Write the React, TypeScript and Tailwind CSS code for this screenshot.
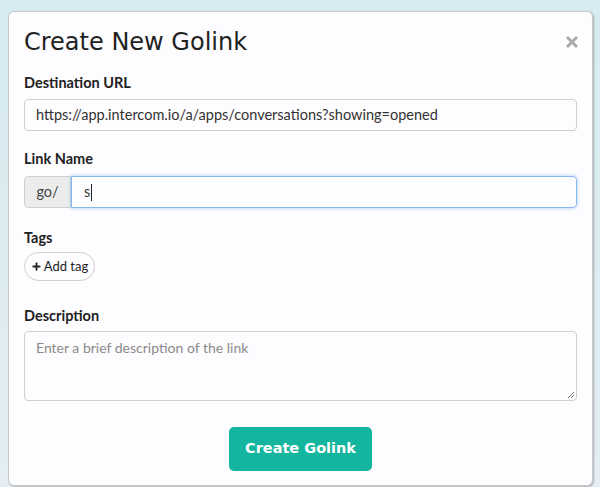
import { Plus } from 'lucide-react';

const App = () => {
    return (
        <div className="w-[600px] h-[487px] overflow-hidden bg-gradient-to-b from-[#d6ebf0] to-[#e4eef3] pt-[11px] pl-[8px]" style={{ fontFamily: 'Lato, "Noto Sans", sans-serif' }}>
            <div className="w-[585px] h-[475px] bg-[#fdfcfe] rounded-[6px] border border-[#c9c9c9] shadow-[1px_1px_2px_rgba(0,0,0,0.25)] px-[15px] pt-[15px] text-[#222]">

                {/* Header */}
                <div className="flex items-center justify-between h-[30px]">
                    <h1 className="text-[24px] leading-[30px] font-medium text-[#222]" style={{ fontFamily: '"DejaVu Sans", sans-serif' }}>
                        Create New Golink
                    </h1>
                    <svg className="mr-[-2px]" width="14" height="14" viewBox="0 0 14 14">
                        <path d="M2 2L12 12M12 2L2 12" stroke="#aaa" strokeWidth="3" />
                    </svg>
                </div>

                {/* Destination URL */}
                <label className="block mt-[15px] text-[14.5px] leading-[22px] font-bold">Destination URL</label>
                <div className="mt-[5px] h-[32px] border border-[#cfcfcf] rounded-[4px] flex items-center px-[11px] text-[14.5px] text-[#333]">
                    https://app.intercom.io/a/apps/conversations?showing=opened
                </div>

                {/* Link Name */}
                <label className="block mt-[17px] text-[14.5px] leading-[22px] font-bold">Link Name</label>
                <div className="mt-[6px] h-[32px] flex">
                    <div className="w-[47px] bg-[#ececec] border border-[#cfcfcf] rounded-l-[4px] flex items-center justify-center text-[14.5px] text-[#444]">
                        go/
                    </div>
                    <div className="flex-1 border border-[#86b9ea] rounded-r-[4px] shadow-[0_0_3px_1px_rgba(130,180,240,0.45)] flex items-center px-[12px] text-[14.5px] text-[#333]">
                        s<span className="inline-block w-px h-[17px] bg-[#222] ml-px" />
                    </div>
                </div>

                {/* Tags */}
                <label className="block mt-[19px] text-[14.5px] leading-[22px] font-bold">Tags</label>
                <button className="mt-[3px] h-[29px] w-[71px] rounded-full border border-[#cfcfcf] flex items-center justify-center gap-[2px] text-[13px] text-[#222]">
                    <Plus size={11} strokeWidth={4} />
                    Add tag
                </button>

                {/* Description */}
                <label className="block mt-[24px] text-[14.5px] leading-[22px] font-bold">Description</label>
                <div className="relative mt-[4px] h-[70px] border border-[#cfcfcf] rounded-[4px] px-[11px] pt-[5px] text-[14px] text-[#8a8a8a]">
                    Enter a brief description of the link
                    <svg className="absolute right-[1px] bottom-[1px]" width="9" height="9" viewBox="0 0 9 9">
                        <path d="M8 2L2 8M8 5L5 8" stroke="#777" strokeWidth="1" />
                    </svg>
                </div>

                {/* Submit */}
                <div className="flex justify-center mt-[26px]">
                    <button className="h-[44px] w-[143px] bg-[#14b59e] rounded-[5px] text-white text-[14.5px] font-bold" style={{ fontFamily: '"DejaVu Sans", sans-serif' }}>
                        Create Golink
                    </button>
                </div>
            </div>
        </div>
    );
};

export default App;
